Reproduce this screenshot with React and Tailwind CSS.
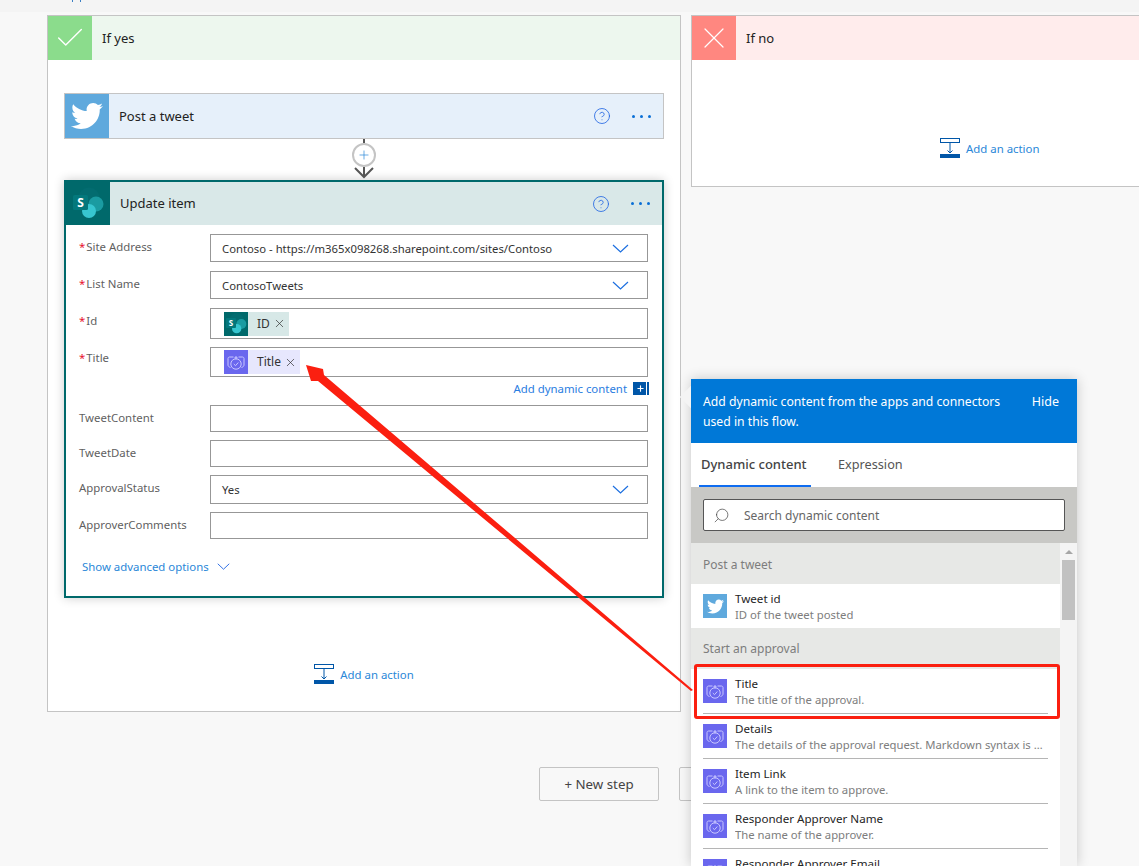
import React from 'react'
import { FaTwitter } from 'react-icons/fa'
import { Check, HelpCircle, Plus, Search, X } from 'lucide-react'

const SharePointIcon = ({ size = 36 }) => (
  <svg width={size} height={size} viewBox="0 0 36 36">
    <circle cx="19" cy="12" r="10.5" fill="#036c70" />
    <circle cx="26" cy="18" r="7.5" fill="#1a9ba1" />
    <circle cx="19" cy="25" r="7" fill="#37c6d0" />
    <rect x="3" y="9" width="15" height="15" rx="1.5" fill="#03787c" />
    <text x="10.5" y="21" textAnchor="middle" fontSize="12" fontWeight="700" fill="#fff" fontFamily="Noto Sans, sans-serif">S</text>
  </svg>
)

const ApprovalIcon = ({ size = 24 }) => (
  <svg width={size} height={size} viewBox="0 0 24 24" fill="none" stroke="#c9c7ff" strokeWidth="1">
    <path d="M6.5 17.5C5 17 4 16.2 4 15V8.5C4 7.5 4.8 7 5.5 7H9.5M14.5 7H18.5C19.2 7 20 7.5 20 8.5V15C20 16.2 19 17 17.5 17.5" />
    <circle cx="12" cy="14" r="5.2" />
    <path d="M9.8 14l1.7 1.7 2.8-3.2" />
    <path d="M12 6v3.5M10.4 7.8H13.6" />
  </svg>
)

const AddActionIcon = () => (
  <svg width="20" height="20" viewBox="0 0 20 20" fill="none" className="shrink-0">
    <rect x="0.5" y="0.5" width="19" height="4" stroke="#0056a8" />
    <path d="M10 5v10M7.5 12.5L10 15l2.5-2.5" stroke="#0056a8" />
    <rect x="0" y="16" width="20" height="4" fill="#0056a8" />
  </svg>
)

const WideChevron = ({ width = 17, height = 9, color = '#1c6fe0' }) => (
  <svg width={width} height={height} viewBox="0 0 17 9" fill="none" stroke={color} strokeWidth="1.2" preserveAspectRatio="none">
    <path d="M1 1l7.5 7L16 1" />
  </svg>
)

const AddAction = () => (
  <div className="flex items-center gap-[6px]">
    <AddActionIcon />
    <span className="pt-[1px] text-[11.4px] text-[#2a87d8]">Add an action</span>
  </div>
)

const CardActions = () => (
  <div className="flex items-center gap-[21px]">
    <HelpCircle size={18} strokeWidth={1.1} className="text-[#2266e3]" />
    <div className="flex gap-[5px]">
      <span className="w-[3px] h-[3px] rounded-full bg-[#0a6fd6]"></span>
      <span className="w-[3px] h-[3px] rounded-full bg-[#0a6fd6]"></span>
      <span className="w-[3px] h-[3px] rounded-full bg-[#0a6fd6]"></span>
    </div>
  </div>
)

const Field = ({ label, required, height, mt, labelTop = 'pt-[4px]', children }) => (
  <div className={`flex ${mt}`}>
    <div className={`w-[131px] shrink-0 text-[11.4px] text-[#5f5f5f] ${labelTop}`}>
      {required && <span className="text-[#e8112d] mr-[1px]">*</span>}
      {label}
    </div>
    <div className={`w-[438px] ${height} border border-[#979797] flex items-center text-[11.3px] text-[#333] bg-white`}>
      {children}
    </div>
  </div>
)

const SelectValue = ({ text }) => (
  <div className="flex-1 flex items-center justify-between pl-[11px] pr-[18px]">
    <span className="pt-[2px]">{text}</span>
    <WideChevron />
  </div>
)

const Token = ({ icon, bg, iconBg, text, width }) => (
  <div className={`ml-[13px] flex items-center h-[24px] ${width} ${bg}`}>
    <div className={`w-[24px] h-[24px] flex items-center justify-center ${iconBg}`}>{icon}</div>
    <span className="ml-[9px] text-[12px] text-[#333]">{text}</span>
    <X size={13} strokeWidth={1.3} className="ml-[3px] text-[#333]" />
  </div>
)

const DynamicItem = ({ icon, iconBg, title, text, height = 'h-[45px]', border = 'border-[#b5b5b5]' }) => (
  <div className={`mx-[12px] ${height} pt-[10px] flex gap-[8px] border-b ${border}`}>
    <div className={`w-[24px] h-[24px] shrink-0 flex items-center justify-center ${iconBg}`}>{icon}</div>
    <div className="min-w-0 -mt-[3px]">
      <div className="text-[11.6px] leading-[16px] text-[#252525]">{title}</div>
      <div className="text-[11.3px] leading-[16px] text-[#7d7d7d] truncate w-[313px]">{text}</div>
    </div>
  </div>
)

const approvalItems = [
  { title: 'Title', text: 'The title of the approval.' },
  { title: 'Details', text: 'The details of the approval request. Markdown syntax is supported.' },
  { title: 'Item Link', text: 'A link to the item to approve.' },
  { title: 'Responder Approver Name', text: 'The name of the approver.' },
  { title: 'Responder Approver Email', text: 'The email of the approver.' },
]

const DynamicPanel = () => (
  <div className="absolute left-[691px] top-[379px] w-[386px] h-[487px] bg-white shadow-[0_0_12px_rgba(0,0,0,0.2)]">
    <div className="absolute -left-[8px] top-[10px] w-[16px] h-[16px] rotate-45 bg-[#f4f4f4]"></div>
    <div className="relative h-[64px] bg-[#0078d7] text-white text-[12.2px] leading-[20px] pl-[12px] pt-[13px] pr-[18px] flex justify-between">
      <span className="w-[310px]">Add dynamic content from the apps and connectors used in this flow.</span>
      <span className="text-[12.5px]">Hide</span>
    </div>
    <div className="h-[44px] flex pl-[8px]">
      <div className="h-[44px] w-[112px] pl-[2px] pt-[2px] border-b-2 border-[#0f6cf0] flex items-center text-[13px] font-medium text-[#444]">Dynamic content</div>
      <div className="h-[44px] ml-[27px] flex items-center text-[12.7px] text-[#555]">Expression</div>
    </div>
    <div className="h-[56px] bg-[#c8c8c5] px-[12px] flex items-center">
      <div className="w-[362px] h-[32px] bg-white border border-[#555] rounded-[2px] flex items-center pl-[9px] gap-[14px]">
        <Search size={17} strokeWidth={1} className="text-[#444] -scale-x-100" />
        <span className="pt-[2px] text-[12px] text-[#666]">Search dynamic content</span>
      </div>
    </div>
    <div className="flex h-[323px] overflow-hidden">
      <div className="w-[369px]">
        <div className="h-[41px] pt-[2px] bg-[#e7e8e6] pl-[12px] flex items-center text-[12px] text-[#7d7d7d]">Post a tweet</div>
        <DynamicItem height="h-[44px]" border="border-transparent" iconBg="bg-[#5fa9dd]" icon={<FaTwitter size={17} className="text-white" />} title="Tweet id" text="ID of the tweet posted" />
        <div className="h-[41px] bg-[#e7e8e6] pl-[12px] flex items-center text-[12px] text-[#7d7d7d]">Start an approval</div>
        {approvalItems.map((item, index) => (
          <DynamicItem key={index} iconBg="bg-[#6a67ee]" icon={<ApprovalIcon />} title={item.title} text={item.text} />
        ))}
      </div>
      <div className="flex-1 bg-[#f4f4f4] px-[2px]">
        <div className="h-[17px] flex items-center justify-center">
          <div className="w-0 h-0 border-x-[4px] border-x-transparent border-b-[4px] border-b-[#a6a6a6]"></div>
        </div>
        <div className="h-[60px] bg-[#c1c1c1]"></div>
      </div>
    </div>
  </div>
)

const Annotations = () => (
  <>
    <div className="absolute left-[694px] top-[664px] w-[366px] h-[55px] border-[3px] border-[#fb1f10] rounded-[3px]"></div>
    <svg className="absolute left-0 top-0 pointer-events-none" width="1139" height="866">
      <polygon fill="#fb1f10" points="306,365 323,369 324,375 693,690 691,691 318,381 311,381" />
    </svg>
  </>
)

const App = () => {
  return (
    <div className="relative w-[1139px] h-[866px] overflow-hidden bg-[#f8f8f8] font-['Noto_Sans',sans-serif]">
      <div className="h-[12px] bg-[#f4f4f4] flex pl-[72px] gap-[7px]">
        <span className="w-[1px] h-[2px] bg-[#3a7fc4]"></span>
        <span className="w-[1px] h-[2px] bg-[#3a7fc4]"></span>
      </div>
      <div className="flex gap-[10px] pl-[47px] pt-[3px] w-[1300px]">
        {/* yes branch */}
        <div className="w-[634px]">
          <div className="h-[697px] bg-white border border-[#c4c4c4]">
            <div className="h-[44px] flex items-center bg-[#edf7ee]">
              <div className="w-[44px] h-[44px] bg-[#8bdc8c] flex items-center justify-center">
                <Check size={34} strokeWidth={1} className="text-white" />
              </div>
              <span className="ml-[10px] pt-[2px] text-[13px] text-[#222]">If yes</span>
            </div>
            <div className="pl-[16px] pt-[33px] pr-[16px]">
              <div className="h-[46px] border border-[#c4c4c4] flex items-center bg-[#e6f0fa] pr-[12px]">
                <div className="w-[44px] h-[44px] bg-[#5fa9dd] flex items-center justify-center">
                  <FaTwitter size={32} className="text-white" />
                </div>
                <span className="flex-1 ml-[10px] pt-[1px] text-[13px] text-[#222]">Post a tweet</span>
                <CardActions />
              </div>
              {/* connector between the two steps */}
              <div className="h-[41px] relative flex flex-col items-center">
                <div className="w-[2px] h-[4px] bg-[#555]"></div>
                <div className="w-[24px] h-[24px] rounded-full border-2 border-[#c4c4c4] bg-white flex items-center justify-center">
                  <Plus size={14} strokeWidth={1.2} className="text-[#2a87d8]" />
                </div>
                <svg width="20" height="12" viewBox="0 0 20 12" fill="none" stroke="#555" strokeWidth="2">
                  <path d="M1 1l9 9 9-9M10 0v10" />
                </svg>
              </div>
              <div className="h-[418px] border-2 border-[#00696b] bg-white shadow-[0_0_10px_rgba(0,0,0,0.2)] pb-[1px]">
                <div className="h-[43px] flex items-center bg-[#d9e8e8] pr-[12px]">
                  <div className="w-[44px] h-[43px] bg-[#00696b] flex items-center justify-center">
                    <SharePointIcon size={36} />
                  </div>
                  <span className="flex-1 ml-[10px] text-[13px] text-[#222]">Update item</span>
                  <CardActions />
                </div>
                <div className="pl-[13px]">
                  <Field label="Site Address" required mt="mt-[9px]" height="h-[28px]">
                    <SelectValue text="Contoso - https://m365x098268.sharepoint.com/sites/Contoso" />
                  </Field>
                  <Field label="List Name" required mt="mt-[9px]" height="h-[28px]">
                    <SelectValue text="ContosoTweets" />
                  </Field>
                  <Field label="Id" required mt="mt-[9px]" height="h-[31px]">
                    <Token icon={<SharePointIcon size={24} />} bg="bg-[#d7e8e7]" iconBg="bg-[#00696b]" text="ID" width="w-[65px]" />
                  </Field>
                  <Field label="Title" required mt="mt-[8px]" height="h-[30px]" labelTop="pt-[2px]">
                    <Token icon={<ApprovalIcon />} bg="bg-[#e7e7fd]" iconBg="bg-[#6a67ee]" text="Title" width="w-[76px]" />
                  </Field>
                  <div className="h-[28px] pb-[5px] flex items-center justify-end w-[570px] gap-[6px] -mr-[1px]">
                    <span className="text-[11.4px] text-[#2a7de1]">Add dynamic content</span>
                    <div className="w-[16px] h-[13px] bg-[#0056a8] flex items-center">
                      <Plus size={9} strokeWidth={3} className="ml-[3px] text-white" />
                      <div className="ml-[1px] w-[1px] h-[13px] bg-white"></div>
                    </div>
                  </div>
                  <Field label="TweetContent" height="h-[27px]" />
                  <Field label="TweetDate" mt="mt-[8px]" height="h-[27px]" />
                  <Field label="ApprovalStatus" mt="mt-[8px]" height="h-[29px]">
                    <SelectValue text="Yes" />
                  </Field>
                  <Field label="ApproverComments" mt="mt-[8px]" height="h-[27px]" />
                  <div className="mt-[19px] pl-[3px] flex items-center gap-[8px] text-[11.4px] text-[#2a87d8]">
                    <span>Show advanced options</span>
                    <WideChevron width={13} height={7} color="#2266e3" />
                  </div>
                </div>
              </div>
              <div className="mt-[66px] flex justify-center">
                <AddAction />
              </div>
            </div>
          </div>
          <div className="mt-[55px] flex gap-[20px] pl-[492px]">
            <div className="w-[120px] h-[34px] pt-[2px] border border-[#c4c4c4] rounded-[2px] flex items-center justify-center text-[13.3px] text-[#444] shrink-0">+ New step</div>
            <div className="w-[120px] h-[34px] border border-[#c4c4c4] rounded-[2px] shrink-0"></div>
          </div>
        </div>
        {/* no branch */}
        <div className="w-[600px] h-[172px] bg-white border border-[#c4c4c4] self-start">
          <div className="h-[44px] flex items-center bg-[#ffecec]">
            <div className="w-[44px] h-[44px] bg-[#ff8780] flex items-center justify-center">
              <X size={36} strokeWidth={0.8} className="text-white" />
            </div>
            <span className="ml-[10px] pt-[2px] text-[13px] text-[#222]">If no</span>
          </div>
          <div className="pl-[248px] pt-[78px]">
            <AddAction />
          </div>
        </div>
      </div>
      <DynamicPanel />
      <Annotations />
    </div>
  )
}

export default App
